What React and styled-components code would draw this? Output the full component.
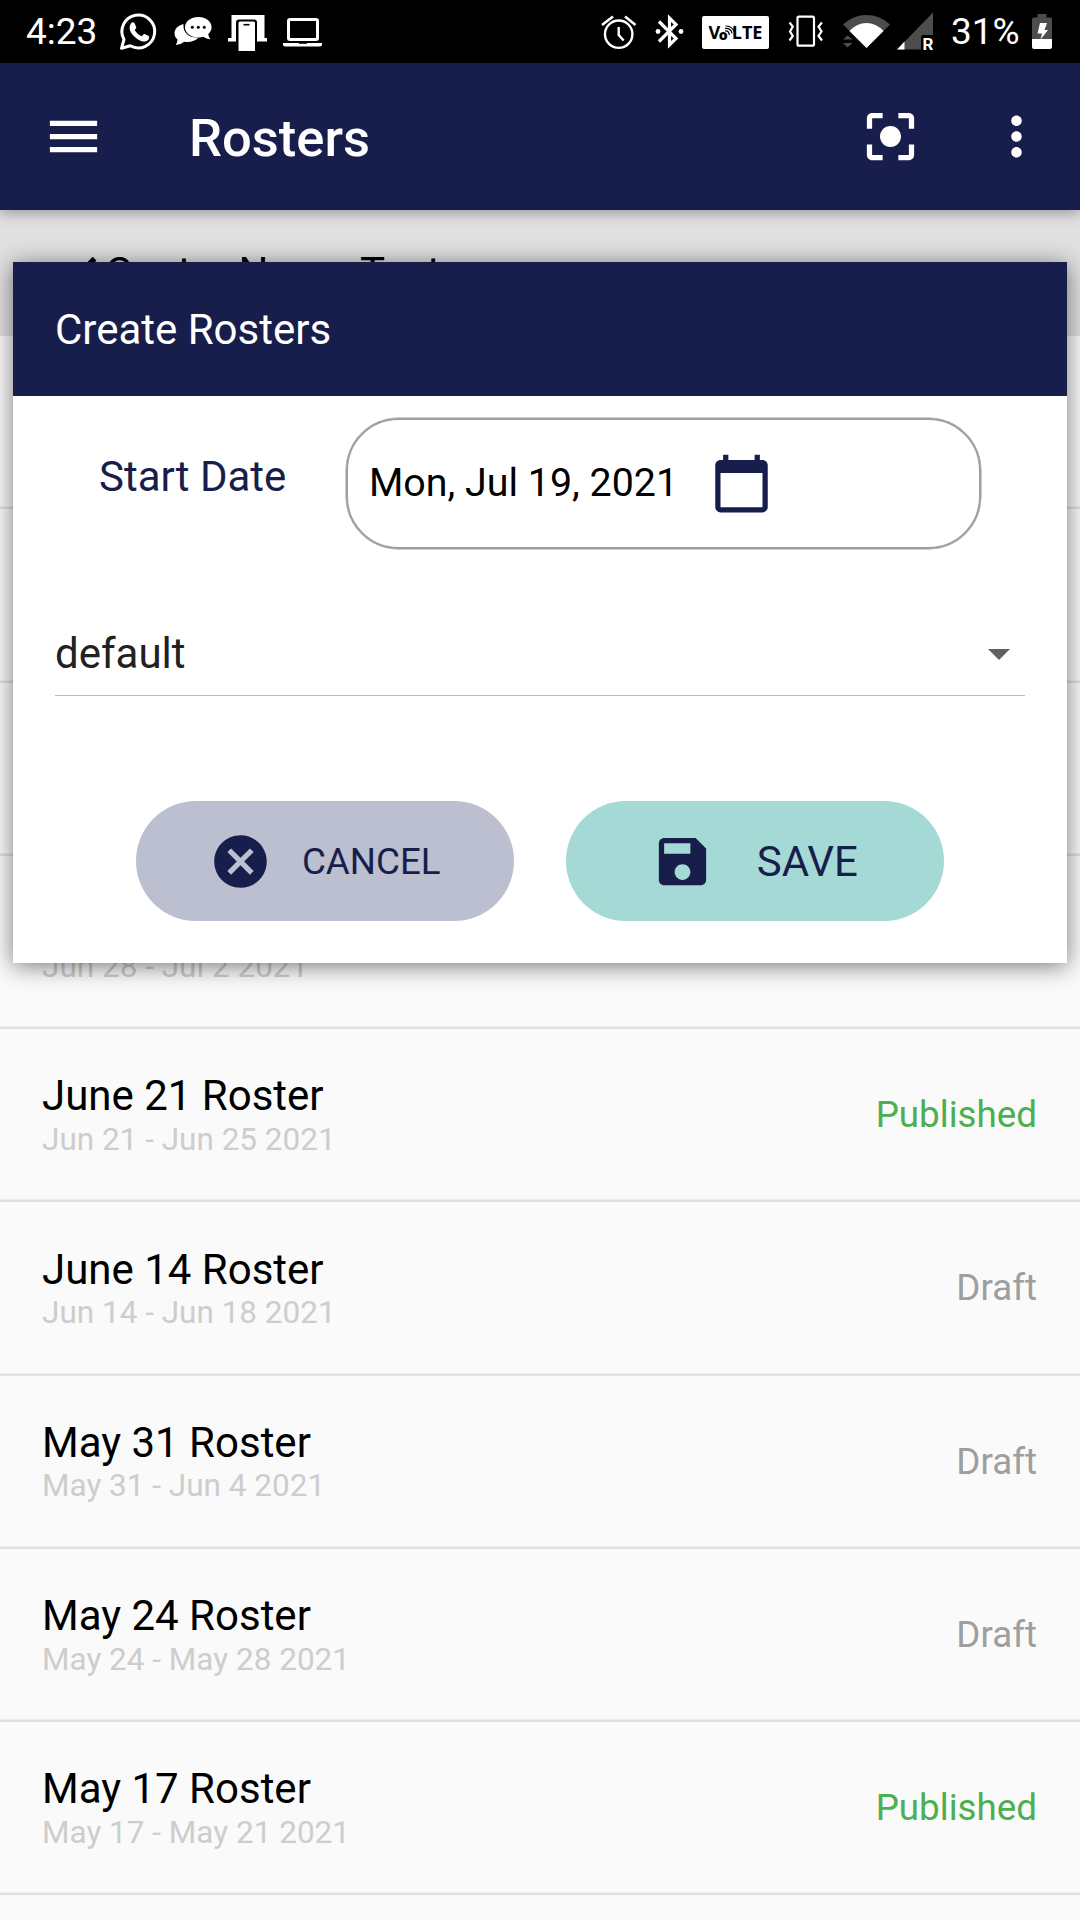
import React from 'react';
import styled, { createGlobalStyle } from 'styled-components';

const NAVY = '#181e4b';

const GlobalStyle = createGlobalStyle`
  * { box-sizing: border-box; }
  body {
    margin: 0;
    background: #fafafa;
    font-family: Roboto, "Noto Sans", sans-serif;
    line-height: 1.172;
    overflow: hidden;
  }
  svg { display: block; flex: none; }
`;

const Screen = styled.div`
  position: relative;
  width: 1080px;
  height: 1920px;
  overflow: hidden;
  display: flex;
  flex-direction: column;
  background: #fafafa;
`;

const StatusBar = styled.header`
  flex: none;
  height: 63px;
  display: flex;
  justify-content: space-between;
  background: #000;
  color: #fff;
  font-size: 37px;
`;

const StatusGroup = styled.div`
  display: flex;
  align-items: center;
  padding: ${(p) => p.$pad};
`;

const StatusText = styled.span`
  width: ${(p) => p.$width}px;
  white-space: nowrap;
`;

const StatusIcon = styled.svg`
  width: ${(p) => p.$width}px;
  height: 63px;
  margin-right: ${(p) => p.$after || 0}px;
  overflow: visible;
`;

const VolteBadge = styled.div`
  position: relative;
  display: flex;
  align-items: center;
  justify-content: center;
  width: 67px;
  height: 33px;
  margin: 2px 19px 0 0;
  border-radius: 2px;
  background: #fff;
  color: #000;
  font: 700 18px/33px "Open Sans", Roboto, sans-serif;
`;

const VolteSmall = styled.span`
  font-size: 14px;
  font-weight: 800;
  margin: 3px 4px 0 -1.5px;
`;

const VolteWaves = styled.svg`
  position: absolute;
  left: 22px;
  top: 9px;
  width: 11px;
  height: 11px;
`;

const AppBar = styled.nav`
  position: relative;
  z-index: 1;
  flex: none;
  height: 147px;
  display: flex;
  align-items: center;
  padding: 0 32px 0 42px;
  background: ${NAVY};
  color: #fff;
  box-shadow: 0 2px 14px rgba(0, 0, 0, 0.36);
`;

const Title = styled.h1`
  flex: 1;
  margin: 4px 0 0 84px;
  font-size: 52.5px;
  font-weight: 500;
`;

const Icon = styled.svg`
  width: 63px;
  height: 63px;
  fill: currentColor;
  margin-right: ${(p) => p.$after || 0}px;
`;

const CenterBand = styled.div`
  flex: none;
  height: 126px;
  display: flex;
  align-items: center;
  padding-left: 56px;
  background: #e0e0e0;
  color: #000;
  font-size: 42px;
`;

const CenterName = styled.span`
  margin-left: -14px;
`;

const BackIcon = styled(Icon)`
  margin-top: -2px;
`;

const RosterList = styled.ul`
  list-style: none;
  margin: 0;
  padding: 0;
`;

const RosterRow = styled.li`
  height: 173.25px;
  display: flex;
  align-items: center;
  justify-content: space-between;
  padding: 0 43px 2.6px 42px;
  background: linear-gradient(#ededed 0 1px, #e0e0e0 1px 3px) bottom / 100% 3px no-repeat;
`;

const RosterName = styled.div`
  min-height: 49.2px;
  font-size: 42px;
  color: #000;
`;

const RosterDates = styled.div`
  margin: 1.5px 0 -1.5px;
  font-size: 31.5px;
  color: #cdcdcd;
`;

const RosterStatus = styled.span`
  padding-top: 0.8px;
  font-size: 36.75px;
  color: ${(p) => (p.$published ? '#4caf50' : '#9e9e9e')};
`;

const Dialog = styled.section`
  position: absolute;
  z-index: 2;
  left: 13px;
  top: 262px;
  width: 1054px;
  height: 701px;
  background: #fff;
  box-shadow: 0 3px 22px rgba(0, 0, 0, 0.52);
`;

const DialogHeader = styled.h2`
  height: 134px;
  margin: 0;
  display: flex;
  align-items: center;
  padding: 2px 0 0 42px;
  background: ${NAVY};
  color: #fff;
  font-size: 42px;
  font-weight: 400;
`;

const DateRow = styled.div`
  display: grid;
  grid-template-columns: 247px 635px;
  align-items: center;
  padding: 22px 0 0 86px;
`;

const DateLabel = styled.label`
  color: ${NAVY};
  font-size: 42px;
  padding-bottom: 13px;
`;

const DateField = styled.div`
  display: flex;
  align-items: center;
  justify-content: space-between;
  height: 131px;
  padding: 0 206px 0 21px;
  border: 2px solid #9e9e9e;
  border-radius: 52.5px;
  box-shadow: 0 0 0 0.5px #9e9e9e;
  color: #000;
  font-size: 39.375px;
`;

const CalendarIcon = styled(Icon)`
  color: ${NAVY};
`;

const Select = styled.div`
  height: 85px;
  margin: 62px 42px 0;
  padding: 2px 15px 0 0;
  display: flex;
  align-items: center;
  justify-content: space-between;
  border-bottom: 1px solid #bdbdbd;
  color: #212121;
  font-size: 42px;
`;

const Caret = styled.svg`
  width: 22px;
  height: 11px;
  fill: #616161;
`;

const Actions = styled.div`
  display: flex;
  justify-content: center;
  gap: 52px;
  margin-top: 104.6px;
`;

const ActionButton = styled.button`
  width: 378.3px;
  height: 120.75px;
  display: flex;
  align-items: center;
  gap: ${(p) => p.$gap}px;
  padding: 1px 0 0 ${(p) => p.$inset}px;
  border: 0;
  border-radius: 60px;
  background: ${(p) => p.$color};
  color: ${NAVY};
  font: 400 ${(p) => p.$size}px Roboto, "Noto Sans", sans-serif;
`;

const rosters = [
  {},
  {},
  {},
  { dates: 'Jun 28 - Jul 2 2021' },
  { name: 'June 21 Roster', dates: 'Jun 21 - Jun 25 2021', status: 'Published' },
  { name: 'June 14 Roster', dates: 'Jun 14 - Jun 18 2021', status: 'Draft' },
  { name: 'May 31 Roster', dates: 'May 31 - Jun 4 2021', status: 'Draft' },
  { name: 'May 24 Roster', dates: 'May 24 - May 28 2021', status: 'Draft' },
  { name: 'May 17 Roster', dates: 'May 17 - May 21 2021', status: 'Published' },
];

const paths = {
  menu: 'M3 18h18v-2H3v2zm0-5h18v-2H3v2zm0-7v2h18V6H3z',
  focus:
    'M12 8c-2.21 0-4 1.79-4 4s1.79 4 4 4 4-1.79 4-4-1.79-4-4-4zm-7 7H3v4c0 1.1.9 2 2 2h4v-2H5v-4zM5 5h4V3H5c-1.1 0-2 .9-2 2v4h2V5zm14-2h-4v2h4v4h2V5c0-1.1-.9-2-2-2zm0 16h-4v2h4c1.1 0 2-.9 2-2v-4h-2v4z',
  more:
    'M12 8c1.1 0 2-.9 2-2s-.9-2-2-2-2 .9-2 2 .9 2 2 2zm0 2c-1.1 0-2 .9-2 2s.9 2 2 2 2-.9 2-2-.9-2-2-2zm0 6c-1.1 0-2 .9-2 2s.9 2 2 2 2-.9 2-2-.9-2-2-2z',
  back: 'M15.41 7.41L14 6l-6 6 6 6 1.41-1.41L10.83 12z',
  calendar:
    'M20 3h-1V1h-2v2H7V1H5v2H4c-1.1 0-2 .9-2 2v16c0 1.1.9 2 2 2h16c1.1 0 2-.9 2-2V5c0-1.1-.9-2-2-2zm0 18H4V8h16v13z',
  cancel:
    'M12 2C6.47 2 2 6.47 2 12s4.47 10 10 10 10-4.47 10-10S17.53 2 12 2zm5 13.59L15.59 17 12 13.41 8.41 17 7 15.59 10.59 12 7 8.41 8.41 7 12 10.59 15.59 7 17 8.41 13.41 12 17 15.59z',
  save:
    'M17 3H5c-1.11 0-2 .9-2 2v14c0 1.1.89 2 2 2h14c1.1 0 2-.9 2-2V7l-4-4zm-5 16c-1.66 0-3-1.34-3-3s1.34-3 3-3 3 1.34 3 3-1.34 3-3 3zm3-10H5V5h10v4z',
};

function Glyph({ name, as: Component = Icon, after }) {
  return (
    <Component viewBox="0 0 24 24" $after={after}>
      <path d={paths[name]} />
    </Component>
  );
}

function SystemBar() {
  return (
    <StatusBar>
      <StatusGroup $pad="0 0 0 26px">
        <StatusText $width={94}>4:23</StatusText>
        <StatusIcon viewBox="0 0 36 63" $width={36} $after={18}>
          <path
            d="M1.5 48.3 4 39.5A16.4 16.4 0 1 1 10.3 45.8Z"
            fill="none"
            stroke="#fff"
            strokeWidth="3"
            strokeLinejoin="round"
          />
          <path
            d="M11.6 22.8c.8-.8 2.3-.8 2.8.1l1.8 4c.3.7-.2 1.4-1.5 3 1.6 3 4 5 7.2 6.3 1.4-1.8 1.9-2.5 2.7-2.2l4 1.9c1 .5.6 3.3-.7 4.3-2.700 2.200-6.400 1.400-10.300-1-4-2.600-7-6.400-7.700-9.200-.8-3 .2-5.800 1.700-7.200Z"
            fill="#fff"
          />
        </StatusIcon>
        <StatusIcon viewBox="0 0 38 63" $width={38} $after={16}>
          <path
            d="M9.500 24C4 25.500.500 29 .500 33.200c0 2.500 1.200 4.700 3 6.300-.2 2.200-.8 3.800-1.700 5.500 3.500-.4 6-1.600 8.200-3.300 6 .8 11.500-.4 14.500-4.200C16 38.500 8.500 33 9.500 24Z"
            fill="#fff"
          />
          <path
            d="M24.500 17C16.800 17 11 21.600 11 27.200s5.800 10.200 13.500 10.200c1.800 0 3.500-.3 5-.7 2 1.500 4.300 2.300 7 2.500-1.400-1.700-2-3.400-2.200-5.200 2-1.800 3.300-4.100 3.300-6.800C37.600 21.600 32 17 24.500 17Z"
            fill="#fff"
          />
          <circle cx="18.300" cy="27.300" r="1.500" />
          <circle cx="24.300" cy="27.300" r="1.500" />
          <circle cx="30.300" cy="27.300" r="1.500" />
        </StatusIcon>
        <StatusIcon viewBox="0 0 39 63" $width={39} $after={16}>
          <path d="M3.500 15h33v23H39v3.500H0V38h3.500Z" fill="#fff" />
          <path d="M8 42V22.500q0-3 3-3h15q3 0 3 3V42Z" fill="#000" />
          <path d="M10.500 51V23q0-1.500 1.500-1.500h13.500q1.500 0 1.500 1.500v28Z" fill="#fff" />
          <path d="M15.500 24.700h6" stroke="#000" strokeWidth="1.600" />
        </StatusIcon>
        <StatusIcon viewBox="0 0 39 63" $width={39}>
          <rect x="5.500" y="19.500" width="29" height="20" rx="1.500" fill="none" stroke="#fff" strokeWidth="3" />
          <path d="M0 43h39v1.500q0 2-2 2H2q-2 0-2-2Z" fill="#fff" />
          <path d="M16 43.300h8" stroke="#000" strokeWidth="1" />
        </StatusIcon>
      </StatusGroup>
      <StatusGroup $pad="0 28px 0 0">
        <StatusIcon viewBox="0 0 36 63" $width={36} $after={18}>
          <circle cx="17.700" cy="34.200" r="13.700" fill="none" stroke="#fff" strokeWidth="2.400" />
          <path d="M1 25 12 16.500M34.500 25 24 16.500" stroke="#fff" strokeWidth="2.600" />
          <path d="M17.700 27v8l5 5.500" fill="none" stroke="#fff" strokeWidth="2.400" />
        </StatusIcon>
        <StatusIcon viewBox="0 0 30 63" $width={30} $after={17}>
          <path
            d="M4 21.500 21 38.500 14.500 45V18L21 24.500 4 41.500"
            fill="none"
            stroke="#fff"
            strokeWidth="3.200"
          />
          <circle cx="3" cy="31.500" r="2.400" fill="#fff" />
          <circle cx="26" cy="31.500" r="2.400" fill="#fff" />
        </StatusIcon>
        <VolteBadge>
          V<VolteSmall>o</VolteSmall>LTE
          <VolteWaves viewBox="0 0 11 11">
            <path
              d="M1 6q3.500-1 4.500 4M1 3.500q6-.5 7 5M1.500 1q6.500 0 8.500 5.500"
              fill="none"
              stroke="#000"
              strokeWidth="1.200"
            />
          </VolteWaves>
        </VolteBadge>
        <StatusIcon viewBox="0 0 36 63" $width={36} $after={19}>
          <rect x="9.500" y="16.700" width="16.500" height="29" rx="1.500" fill="none" stroke="#fff" strokeWidth="2.200" />
          <path
            d="M1.500 22.500 4.800 26.500 2 31.500 4.800 36 1.500 40.500M34 22.500 30.500 26.500 33.500 31.500 30.500 36 34 40.500"
            fill="none"
            stroke="#fff"
            strokeWidth="2.200"
          />
        </StatusIcon>
        <StatusIcon viewBox="0 0 47 63" $width={47} $after={7}>
          <path d="M23.500 48 0 24.500Q10 15 23.500 15T47 24.500Z" fill="#4d4d4d" />
          <path d="M23.500 48 6.500 31Q14 23 23.500 23T40.500 31Z" fill="#fff" />
          <path d="M0 39.500 4.500 35.500 9.500 39.500ZM0 43H9.500L4.500 47.500Z" fill="#4d4d4d" />
        </StatusIcon>
        <StatusIcon viewBox="0 0 36 63" $width={36} $after={18}>
          <path d="M0 49.500 36 12.500V35H26q-2 0-2 2v12.500Z" fill="#4d4d4d" />
          <path d="M0 49.500 7.500 41.500v8Z" fill="#fff" />
          <text x="25.500" y="49.500" fontFamily="Roboto, sans-serif" fontSize="17" fontWeight="700" fill="#fff">
            R
          </text>
        </StatusIcon>
        <StatusText $width={81}>31%</StatusText>
        <StatusIcon viewBox="0 0 20 63" $width={20}>
          <path d="M5.500 14h9v3.500H18q2 0 2 2V39H0V19.500q0-2 2-2h3.500Z" fill="#4d4d4d" />
          <path d="M0 39h20v8q0 2-2 2H2q-2 0-2-2Z" fill="#fff" />
          <path d="M8 23h7l-2.500 7H16L8.500 39.500 10 33.500H5.500Z" fill="#fff" />
        </StatusIcon>
      </StatusGroup>
    </StatusBar>
  );
}

export default function App() {
  return (
    <Screen>
      <GlobalStyle />
      <SystemBar />
      <AppBar>
        <Glyph name="menu" />
        <Title>Rosters</Title>
        <Glyph name="focus" after={63} />
        <Glyph name="more" />
      </AppBar>
      <CenterBand>
        <Glyph name="back" as={BackIcon} />
        <CenterName>Center Name Test</CenterName>
      </CenterBand>
      <RosterList>
        {rosters.map((r, i) => (
          <RosterRow key={i}>
            <div>
              <RosterName>{r.name}</RosterName>
              <RosterDates>{r.dates}</RosterDates>
            </div>
            {r.status && (
              <RosterStatus $published={r.status === 'Published'}>{r.status}</RosterStatus>
            )}
          </RosterRow>
        ))}
      </RosterList>
      <Dialog role="dialog">
        <DialogHeader>Create Rosters</DialogHeader>
        <DateRow>
          <DateLabel>Start Date</DateLabel>
          <DateField>
            Mon, Jul 19, 2021
            <Glyph name="calendar" as={CalendarIcon} />
          </DateField>
        </DateRow>
        <Select>
          default
          <Caret viewBox="0 0 22 11">
            <path d="M0 0h22L11 11z" />
          </Caret>
        </Select>
        <Actions>
          <ActionButton $color="#bbbfd0" $inset={73.2} $gap={30} $size={36.75}>
            <Glyph name="cancel" />
            CANCEL
          </ActionButton>
          <ActionButton $color="#a5d9d5" $inset={85.3} $gap={42.5} $size={42}>
            <Glyph name="save" />
            SAVE
          </ActionButton>
        </Actions>
      </Dialog>
    </Screen>
  );
}
